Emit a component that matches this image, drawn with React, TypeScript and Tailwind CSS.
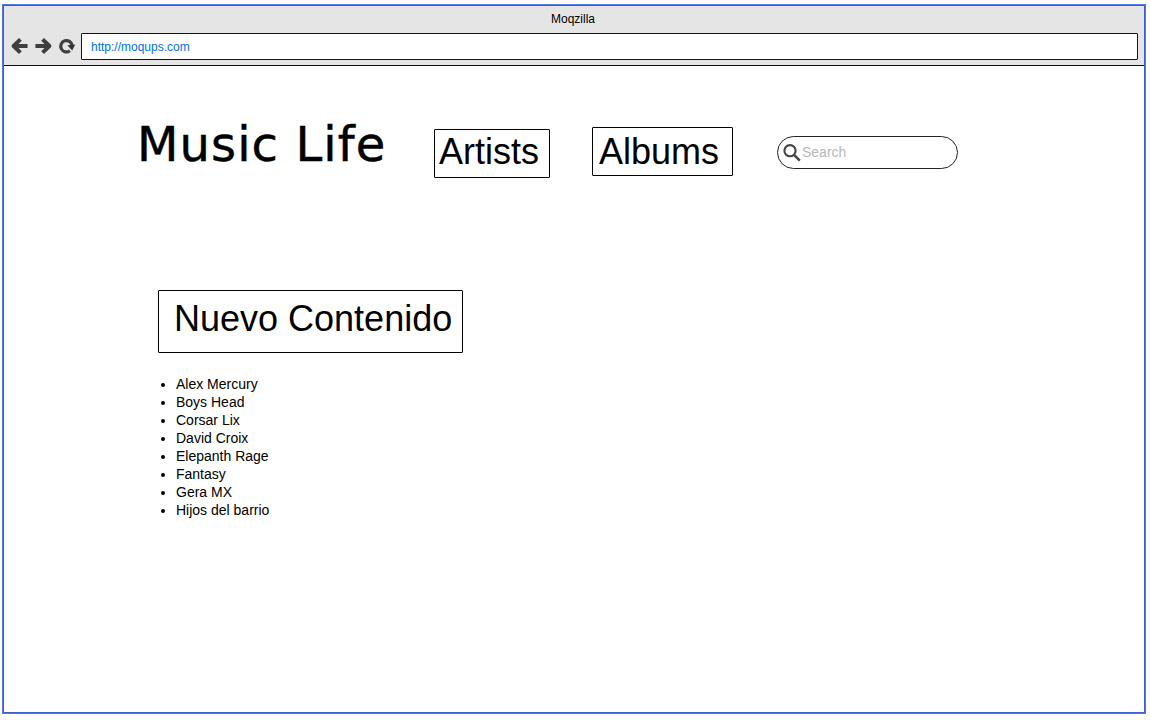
const artists = [
  'Alex Mercury',
  'Boys Head',
  'Corsar Lix',
  'David Croix',
  'Elepanth Rage',
  'Fantasy',
  'Gera MX',
  'Hijos del barrio',
];

function Arrow({ flip = false }: { flip?: boolean }) {
  return (
    <svg width="18" height="18" viewBox="0 0 18 18" className={flip ? 'rotate-180' : ''} fill="none" stroke="#3f3f3f" strokeWidth="4" strokeLinejoin="round">
      <path d="M3.5 9H17.6M10.4 2.4L3.6 9l6.8 6.6" />
    </svg>
  );
}

function Reload() {
  return (
    <svg width="18" height="18" viewBox="0 0 18 18" fill="none">
      <path d="M11.9 13.8A5.7 5.7 0 1 1 14.1 8.5" stroke="#3f3f3f" strokeWidth="3.2" />
      <path d="M9.4 8.2l7.8-.6L14.2 13.6z" fill="#333" />
    </svg>
  );
}

function Toolbar() {
  return (
    <header className="h-[60px] border-b border-[#111] bg-[#e5e5e5]">
      <h1 className="h-[27px] pl-px pr-[3px] text-center text-xs leading-[26px]">Moqzilla</h1>
      <div className="flex items-center pl-[6px] pr-[6px]">
        <div className="mb-[2px] flex"><Arrow /></div>
        <div className="mb-[2px] ml-[7px] flex"><Arrow flip /></div>
        <div className="mb-[2px] ml-[5px] flex"><Reload /></div>
        <div className="ml-[5px] h-[27px] flex-1 rounded-[1px] border border-[#151515] bg-white pl-[9px] text-xs leading-[26px] text-[#0070ee]">
          http://moqups.com
        </div>
      </div>
    </header>
  );
}

export default function App() {
  return (
    <div className="h-[720px] w-[1151px] bg-white pl-[2px] pt-1 font-['Liberation_Sans',Arial,sans-serif] text-black">
      <div className="h-[710px] w-[1144px] border border-[#5278e6]">
        <div className="h-full border border-[#3c60cb]">
          <Toolbar />
          <main>
            <nav className="flex h-[224px] items-start pl-[133px]">
              <div className="mt-[50px] w-[297px] whitespace-nowrap font-['DejaVu_Sans',sans-serif] text-[48px] leading-[56px] tracking-[1.1px] [-webkit-text-stroke:0.5px_black]">
                Music Life
              </div>
              <div className="mt-[63px] h-[49px] w-[116px] rounded-[1px] border border-black pl-1 text-4xl leading-[44px]">Artists</div>
              <div className="ml-[42px] mt-[61px] h-[49px] w-[141px] rounded-[1px] border border-black pl-1.5 text-4xl leading-[48px]">Albums</div>
              <div className="ml-11 mt-[70px] flex h-[33px] w-[181px] rounded-full border border-[#222] pl-[5px]">
                <svg width="20" height="20" viewBox="0 0 20 20" className="mt-[6px]" fill="none" stroke="#444">
                  <circle cx="7" cy="7.7" r="5.6" strokeWidth="2.1" />
                  <path d="M11 11.8l5.8 5.8" strokeWidth="2.5" />
                </svg>
                <span className="-ml-px text-sm leading-[30px] text-[#b8b8b8]">Search</span>
              </div>
            </nav>
            <section className="pl-[154px]">
              <h2 className="h-[63px] w-[305px] rounded-[1px] border border-black pl-[15px] text-4xl leading-[56px]">Nuevo Contenido</h2>
              <ul className="mt-[22px] list-disc pl-[18px] text-sm leading-[18px]">
                {artists.map((name) => (
                  <li key={name}>{name}</li>
                ))}
              </ul>
            </section>
          </main>
        </div>
      </div>
    </div>
  );
}
